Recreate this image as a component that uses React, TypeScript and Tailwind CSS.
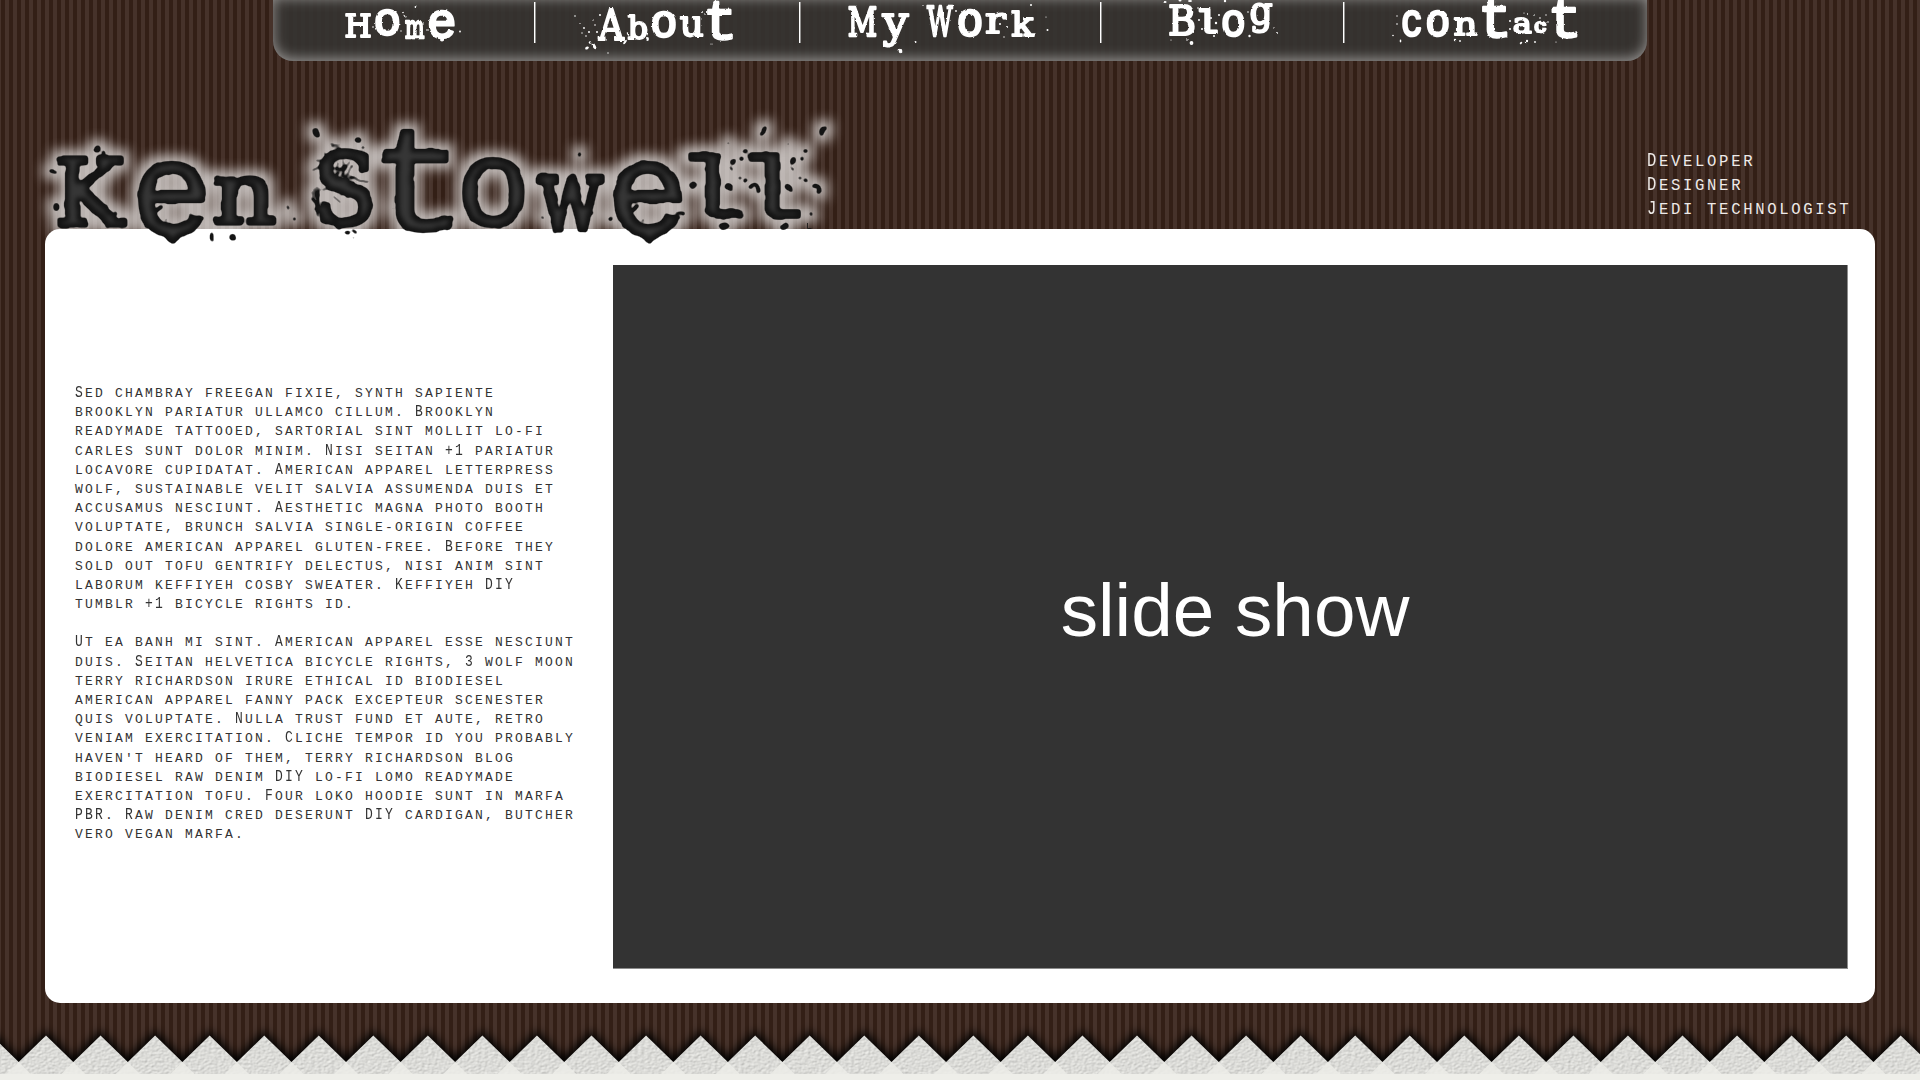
import React from "react";

type Box = [string, number, number, number, number];
type Dot = [number, number, number, number?, number?];

const SLAB = '"DejaVu Serif", serif';
const MONO = '"Liberation Mono", monospace';

const faceOf = (ch: string) => ("eotlc".includes(ch) ? MONO : SLAB);

let measurer: CanvasRenderingContext2D | null = null;
function inkBox(ch: string) {
  if (!measurer) measurer = document.createElement("canvas").getContext("2d");
  const ctx = measurer!;
  ctx.font = `100px ${faceOf(ch)}`;
  const m = ctx.measureText(ch);
  return {
    left: -m.actualBoundingBoxLeft,
    right: m.actualBoundingBoxRight,
    top: -m.actualBoundingBoxAscent,
    bottom: m.actualBoundingBoxDescent,
  };
}

/** One typewriter letter stretched to fill left/top/right/bottom. */
function Glyph({ box, slab, mono }: { box: Box; slab: number; mono: number }) {
  const [ch, l, t, r, b] = box;
  const ink = inkBox(ch);
  const stroke = faceOf(ch) === MONO ? mono : slab;
  const h = stroke / 2;
  const sx = (r - l - stroke) / (ink.right - ink.left);
  const sy = (b - t - stroke) / (ink.bottom - ink.top);
  return (
    <text
      transform={`translate(${l + h - ink.left * sx} ${t + h - ink.top * sy}) scale(${sx} ${sy})`}
      fontFamily={faceOf(ch)}
      fontSize={100}
      fill="currentColor"
      stroke="currentColor"
      strokeWidth={stroke}
      strokeLinejoin="round"
      vectorEffect="non-scaling-stroke"
    >
      {ch}
    </text>
  );
}

function Dots({ dots }: { dots: Dot[] }) {
  return (
    <g fill="currentColor">
      {dots.map(([x, y, rx, ry, rot], i) => (
        <ellipse key={i} cx={x} cy={y} rx={rx} ry={ry ?? rx} transform={`rotate(${rot ?? 0} ${x} ${y})`} />
      ))}
    </g>
  );
}

interface NavEntry {
  name: string;
  x: number;
  end: number;
  glyphs: Box[];
  dots: Dot[];
}

const NAV: NavEntry[] = [
  {
    name: "Home",
    x: 273,
    end: 534,
    glyphs: [
      ["H", 345, 12.3, 371, 37.5],
      ["o", 375, 9, 399.5, 36.7],
      ["m", 404.6, 21, 425, 39.3],
      ["e", 428.6, 10, 455, 40],
    ],
    dots: [[415.5, 7, 0.9], [405, 16, 1.8, 0.9, 40], [403, 12.5, 0.8], [373, 27, 0.8], [460, 31.5, 0.9], [442, 40, 2, 1.4], [423, 24, 0.8], [427, 30, 0.8], [401, 31, 0.7]],
  },
  {
    name: "About",
    x: 535,
    end: 799,
    glyphs: [
      ["A", 597.5, 7.3, 625.5, 40.5],
      ["b", 627.5, 14, 647.5, 40],
      ["o", 651.8, 11, 676, 38.5],
      ["u", 679.6, 17, 703.6, 37.5],
      ["t", 707, 1, 733, 40.7],
    ],
    dots: [[594, 46, 1.6, 3.6, -30], [587, 48, 2, 1.3, -30], [590, 42.5, 1.2], [575, 16, 0.8], [580, 24, 0.8], [584, 28, 0.9], [589, 32, 1], [586, 36, 0.8], [595, 25, 0.8], [600, 15, 1], [593, 20, 0.7], [597, 32, 1], [625, 42, 2.6, 1, -50], [628, 34, 2, 0.8, 60], [647.5, 39, 1.4, 2], [702, 12, 0.9], [705, 14, 0.8], [712, 44, 0.6], [608, 53, 0.7], [582, 33, 0.7]],
  },
  {
    name: "My Work",
    x: 800,
    end: 1100,
    glyphs: [
      ["M", 848, 7.3, 877, 37.3],
      ["y", 881, 12.7, 909.7, 47.7],
      ["W", 926, 5, 953.6, 37],
      ["o", 958, 9, 982, 37.7],
      ["r", 985.4, 14, 1007, 34.3],
      ["k", 1011, 9, 1035, 36.7],
    ],
    dots: [[900, 51, 1.3, 2.2, -10], [915.5, 42, 1], [1031, 5, 1], [1047.5, 30, 1], [1046, 17, 0.6], [1000, 24, 1], [1007, 27, 1], [923, 6, 0.8], [956, 11, 0.9], [854, 28, 1], [1004, 37, 0.7]],
  },
  {
    name: "Blog",
    x: 1101,
    end: 1343,
    glyphs: [
      ["B", 1169, 4, 1195, 36.3],
      ["l", 1198.8, 8, 1218, 34.3],
      ["o", 1222, 9, 1244.5, 37.3],
      ["g", 1250, 3, 1273, 34],
    ],
    dots: [[1191.5, 43, 1.9, 2], [1165, 2, 1.6, 1], [1190, 1, 2, 1], [1180, 0.5, 1.5, 1], [1225, 1, 1.2], [1199, 20, 1], [1202, 29, 1], [1211, 18, 1], [1216, 23, 1.2], [1219, 15, 1], [1249.5, 36, 1.2], [1277, 33, 0.9], [1274, 28, 0.7], [1187, 40, 0.8], [1198, 8, 0.8], [1214, 36, 1], [1248, 12, 0.8], [1171, 40, 0.6]],
  },
  {
    name: "Contact",
    x: 1344,
    end: 1647,
    glyphs: [
      ["c", 1402, 9.3, 1421.5, 37.3],
      ["o", 1426.5, 9, 1449, 37.2],
      ["n", 1453.5, 16.7, 1477.5, 35.7],
      ["t", 1482, -3, 1507.6, 38.5],
      ["a", 1513, 17, 1532, 34.3],
      ["c", 1534, 20, 1546.5, 33],
      ["t", 1551.5, -1, 1577.5, 38.7],
    ],
    dots: [[1400.5, 41, 0.8, 1.4], [1393, 35.5, 0.8], [1397, 24, 0.8], [1455, 40, 1.2], [1460, 41, 0.9], [1521, 43, 1.4, 0.9, -40], [1527, 41, 1.2], [1535, 42, 0.9], [1528, 14, 0.9], [1534, 15, 0.8], [1540, 18, 0.8], [1524, 13, 0.6], [1510, 21, 1], [1510, 29, 1], [1548, 22, 0.8], [1546, 15, 0.7], [1556, 42, 0.6], [1397, 16, 0.7], [1487, 9, 0.6]],
  },
];

const TITLE: Box[] = [
  ["K", 56, 156, 128, 228],
  ["e", 137.3, 160, 205.7, 237],
  ["n", 213, 176, 276.3, 226],
  ["S", 319, 149, 373, 228],
  ["t", 382, 129, 452.7, 234],
  ["o", 461.7, 157, 525, 228.5],
  ["w", 536, 173.3, 604.7, 232.5],
  ["e", 613.3, 160, 682, 237],
  ["l", 688.7, 152, 742, 219.5],
  ["l", 748.7, 152, 801, 219.5],
];

const ellSplat = (dx: number): Dot[] => [
  [763.3 + dx, 131, 2.5, 5.5, 32],
  [728.3 + dx, 143.3, 1.2],
  [745.5 + dx, 151, 2.4, 2],
  [742.5 + dx, 158.7, 2.3],
  [733 + dx, 161.5, 2.7, 3.6, 20],
  [731.3 + dx, 168.5, 1.2, 2.8, -30],
  [724 + dx, 166.7, 0.9],
  [740 + dx, 178, 1.8, 1.5],
  [745.5 + dx, 180.3, 2],
  [729 + dx, 187, 4.4, 3.6, 30],
  [732 + dx, 190.5, 1.8],
];

const TITLE_DOTS: Dot[] = [
  [97, 149, 3.6], [103.5, 153.5, 1.8, 2], [53, 171.3, 4, 2, 10], [57.3, 207, 3, 4], [104, 184, 1], [115.7, 213, 1.7], [122, 212, 0.9], [107, 207, 2],
  [211.7, 237, 1.8, 4.7], [217, 233.8, 0.9], [232.7, 238.3, 3.3], [288, 208, 1.1, 2.2, -25], [294.4, 219, 1.8],
  [316, 132.3, 3.4, 4.3, -20], [357.5, 140, 3.8, 2.8], [363, 147.5, 1.6], [378.5, 154, 1], [392, 208.5, 1.1], [397.3, 243.5, 1.2, 0.8],
  [347.3, 232.7, 3, 1.6, 10], [354.5, 232, 3, 1.6, 15], [353.5, 237.7, 1.4, 1], [338, 226.5, 3],
  [579.5, 153.5, 1.7, 2.4, 15], [542, 217.7, 1.4], [610.5, 218.3, 2.2], [591.7, 213, 1.8], [597.7, 212, 0.8],
  [683.7, 156.3, 0.9], [693.7, 185.2, 4, 3.2, -30], [680, 213.5, 4.5, 2, 0], [683, 219, 0.9, 1.6, 20], [742.5, 216, 0.9, 3, 15],
  [166, 220.5, 1, 1.8, 30], [642, 220.5, 1, 1.8, 30], [811, 213.7, 1.5, 1.9],
  [724, 226.3, 4.5, 3.5, -20], [784.3, 226.3, 4.5, 3.5, -20],
  ...ellSplat(0),
  ...ellSplat(60),
];

const SCRATCHES =
  "M330 143.5l11 1M331 146l9 2M312 170.5l8-3.5M316 160l9-1M333 168l10 3M338 162l-2 17M343 160l2 18M350 161l-10 20M346 164l-3 12M333 181l10-14M352 166l-6 12M349 176l20 7M341 180l12-2M312 191l6 26M314 188l5 20M320 188l-6 22M311 198l10 12M317 186l1 30M315 205l6 8M333 196l8 7M341 189l8 9M345 190l-4 6M322 190l8-2M324 152l3 6";

function Logo() {
  return (
    <svg className="block h-[192px] w-[860px] overflow-visible text-[#141414]" viewBox="0 62 860 192" aria-label="Ken Stowell">
      <defs>
        <filter id="ink" filterUnits="userSpaceOnUse" x="0" y="62" width="860" height="192" colorInterpolationFilters="sRGB">
          <feTurbulence type="fractalNoise" baseFrequency="0.08" numOctaves="1" seed="4" result="noise" />
          <feDisplacementMap in="SourceGraphic" in2="noise" scale="4" xChannelSelector="R" yChannelSelector="G" result="jagged" />
          <feGaussianBlur in="jagged" stdDeviation="0.9" result="soft" />
          <feComponentTransfer in="soft" result="rough">
            <feFuncA type="linear" slope="2.600" intercept="-0.700" />
          </feComponentTransfer>
          <feMorphology in="rough" operator="erode" radius="3.500" result="core" />
          <feGaussianBlur in="core" stdDeviation="2" result="coreBlur" />
          <feFlood floodColor="#363636" />
          <feComposite in2="coreBlur" operator="in" result="sheen" />
          <feMorphology in="jagged" operator="dilate" radius="6" result="fat" />
          <feGaussianBlur in="fat" stdDeviation="6" result="halo" />
          <feFlood floodColor="#ffffff" floodOpacity="0.66" />
          <feComposite in2="halo" operator="in" result="glow" />
          <feMerge>
            <feMergeNode in="glow" />
            <feMergeNode in="rough" />
            <feMergeNode in="sheen" />
          </feMerge>
        </filter>
      </defs>
      <g filter="url(#ink)">
        {TITLE.map((box, i) => (
          <Glyph key={i} box={box} slab={5.2} mono={4.2} />
        ))}
        <path d="M160 234l13.5 9 14-9zM636 234l13.5 9 14-9z" fill="currentColor" />
        <path d="M153 213l8-6M629 213l8-6M750.500 187q7-6 8 5M814 186q6-1 5.500 6" fill="none" stroke="currentColor" strokeWidth="4" strokeLinecap="round" />
        <Dots dots={TITLE_DOTS} />
        <path d={SCRATCHES} fill="none" stroke="currentColor" strokeWidth="1.4" />
      </g>
      <path d="M807.500 223v5.500h4" fill="none" stroke="currentColor" strokeWidth="0.8" />
    </svg>
  );
}

function NavBar() {
  return (
    <nav className="relative ml-[273px] flex h-[61px] w-[1374px] shrink-0 rounded-b-[20px] bg-[#353331]/92 text-white shadow-[inset_0_-2px_13px_rgba(255,255,255,0.5)]">
      <svg className="absolute h-0 w-0">
        <filter id="wear" x="-10%" y="-20%" width="120%" height="140%">
          <feTurbulence type="fractalNoise" baseFrequency="0.22" numOctaves="2" seed="9" result="noise" />
          <feDisplacementMap in="SourceGraphic" in2="noise" scale="2.2" xChannelSelector="R" yChannelSelector="G" />
        </filter>
      </svg>
      {NAV.map((entry, i) => (
        <React.Fragment key={entry.name}>
          {i > 0 && <span className="mt-0.5 h-[41px] w-px shrink-0 bg-white shadow-[1px_0_0_rgba(255,255,255,0.45)]" />}
          <a href="#" aria-label={entry.name} className="block min-w-0" style={{ flexGrow: entry.end - entry.x, flexBasis: 0 }}>
            <svg className="block h-[61px] w-full overflow-visible" viewBox={`${entry.x} 0 ${entry.end - entry.x} 61`} preserveAspectRatio="xMidYMid meet">
              <g filter="url(#wear)">
                {entry.glyphs.map((box, k) => (
                  <Glyph key={k} box={box} slab={2} mono={2.4} />
                ))}
                <Dots dots={entry.dots} />
              </g>
            </svg>
          </a>
        </React.Fragment>
      ))}
    </nav>
  );
}

/** Small-caps setting on a fixed pitch: capitals and digits keep the width but stand taller. */
function SmallCaps({ text }: { text: string }) {
  return (
    <>
      {text.split(/([A-Z0-9+]+)/).map((part, i) =>
        i % 2 ? (
          <span key={i} className="inline-block origin-[50%_68%] scale-y-[1.32]">
            {part}
          </span>
        ) : (
          part
        ),
      )}
    </>
  );
}

const PARAGRAPHS = [
  [
    "Sed chambray freegan fixie, synth sapiente",
    "brooklyn pariatur ullamco cillum. Brooklyn",
    "readymade tattooed, sartorial sint mollit lo-fi",
    "carles sunt dolor minim. Nisi seitan +1 pariatur",
    "locavore cupidatat. American apparel letterpress",
    "wolf, sustainable velit salvia assumenda duis et",
    "accusamus nesciunt. Aesthetic magna photo booth",
    "voluptate, brunch salvia single-origin coffee",
    "dolore american apparel gluten-free. Before they",
    "sold out tofu gentrify delectus, nisi anim sint",
    "laborum keffiyeh cosby sweater. Keffiyeh DIY",
    "tumblr +1 bicycle rights id.",
  ],
  [
    "Ut ea banh mi sint. American apparel esse nesciunt",
    "duis. Seitan helvetica bicycle rights, 3 wolf moon",
    "terry richardson irure ethical id biodiesel",
    "american apparel fanny pack excepteur scenester",
    "quis voluptate. Nulla trust fund et aute, retro",
    "veniam exercitation. Cliche tempor id you probably",
    "haven't heard of them, terry richardson blog",
    "biodiesel raw denim DIY lo-fi lomo readymade",
    "exercitation tofu. Four loko hoodie sunt in marfa",
    "PBR. Raw denim cred deserunt DIY cardigan, butcher",
    "vero vegan marfa.",
  ],
];

const TOOTH = 54.55;

function PaperEdge() {
  let zig = "M-40 60";
  let notch = "";
  for (let k = -1; k < 37; k++) {
    const peak = 46 + k * TOOTH;
    zig += `L${peak - TOOTH / 2} 42L${peak} 15.500`;
    notch += `M${peak + TOOTH / 2} 42l-12 12h24z`;
  }
  zig += "L1980 60z";
  return (
    <svg className="block h-[60px] w-full overflow-visible" viewBox="0 0 1920 60" preserveAspectRatio="none">
      <defs>
        <filter id="paper" filterUnits="userSpaceOnUse" x="-40" y="0" width="2020" height="60" colorInterpolationFilters="sRGB">
          <feTurbulence type="fractalNoise" baseFrequency="0.3 0.45" numOctaves="3" seed="2" result="n" />
          <feDiffuseLighting in="n" surfaceScale="0.45" lightingColor="#f8f8f4" result="lit">
            <feDistantLight azimuth="225" elevation="62" />
          </feDiffuseLighting>
          <feComposite in="lit" in2="SourceAlpha" operator="in" />
        </filter>
        <filter id="shade" filterUnits="userSpaceOnUse" x="-40" y="-20" width="2020" height="90">
          <feGaussianBlur stdDeviation="5" />
        </filter>
      </defs>
      <path d={zig} fill="#000000" stroke="#000000" strokeWidth="7" filter="url(#shade)" />
      <path d={zig} fill="#dcdcd8" filter="url(#paper)" />
      <path d={notch} fill="#ecece7" opacity="0.85" />
      <rect y="54" width="1920" height="6" fill="#eeeee9" />
    </svg>
  );
}

export default function App() {
  return (
    <div className="flex h-[1080px] w-full flex-col overflow-hidden bg-[repeating-linear-gradient(90deg,#46322a_0px,#46322a_1px,#331f16_1px,#331f16_5px,#46322a_5px,#46322a_8px)]">
      <NavBar />
      <header className="relative z-10 mt-px -mb-[25px] flex h-[192px] shrink-0 justify-between">
        <Logo />
        <div className="mt-[88px] w-[273px] font-['Liberation_Mono',monospace] text-[15.6px] leading-6 tracking-[2.66px] whitespace-nowrap text-[#eeeae8] uppercase">
          <p><SmallCaps text="Developer" /></p>
          <p><SmallCaps text="Designer" /></p>
          <p><SmallCaps text="Jedi technologist" /></p>
        </div>
      </header>
      <main className="mx-[45px] flex h-[774px] shrink-0 rounded-[15px] bg-white">
        <section className="flex w-[568px] flex-col gap-[19.2px] pt-[155px] pl-[30px] font-['Liberation_Mono',monospace] text-[13px] leading-[19.2px] tracking-[2.2px] whitespace-nowrap text-[#333333] uppercase">
          {PARAGRAPHS.map((lines, i) => (
            <div key={i}>
              {lines.map((line) => (
                <p key={line} className="h-[19.2px]">
                  <SmallCaps text={line} />
                </p>
              ))}
            </div>
          ))}
        </section>
        <section className="mt-9 flex h-[704px] w-[1235px] items-center justify-center border-r border-b border-[#8c8c8c] bg-[#333333]">
          <span className="mt-[-12px] ml-2.5 font-['Liberation_Sans',Arial,sans-serif] text-[74.7px] leading-none text-white">slide show</span>
        </section>
      </main>
      <footer className="mt-[17px] h-[60px] shrink-0">
        <PaperEdge />
      </footer>
    </div>
  );
}
